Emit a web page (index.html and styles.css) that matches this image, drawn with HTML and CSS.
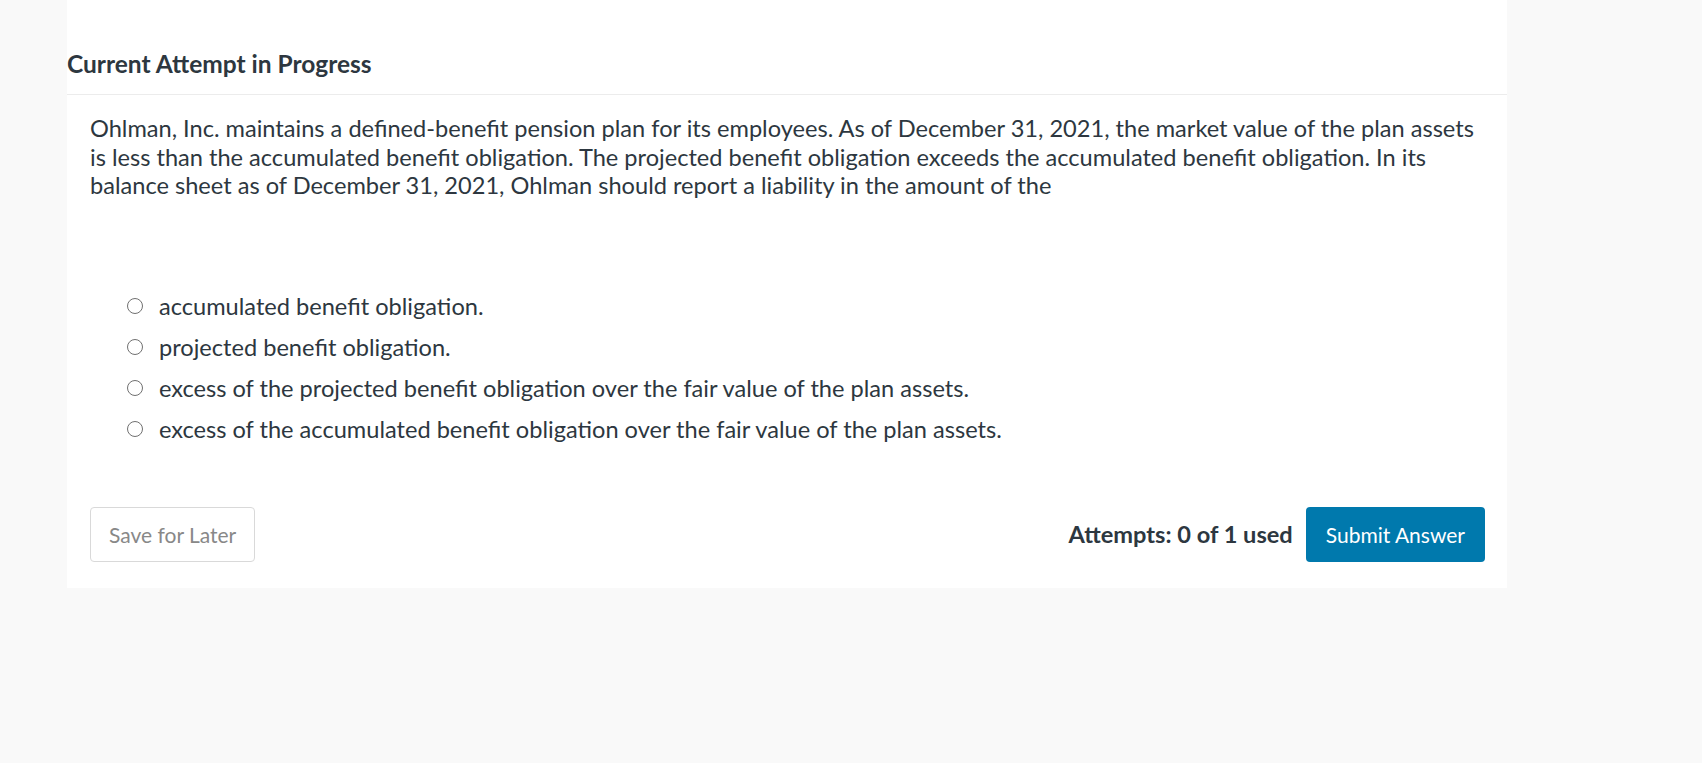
FILE: index.html
```html
<!DOCTYPE html>
<html lang="en">
<head>
    <meta charset="UTF-8">
    <title>Current Attempt in Progress</title>
    <link rel="stylesheet" href="styles.css">
</head>
<body>
<div class="panel">
    <div class="head">
        <h2>Current Attempt in Progress</h2>
    </div>
    <div class="question">
        <p class="stem">Ohlman, Inc. maintains a defined-benefit pension plan for its employees. As of December 31, 2021, the market value of the plan assets is less than the accumulated benefit obligation. The projected benefit obligation exceeds the accumulated benefit obligation. In its balance sheet as of December 31, 2021, Ohlman should report a liability in the amount of the</p>
        <ul class="choices">
            <li><span class="radio"></span>accumulated benefit obligation.</li>
            <li><span class="radio"></span>projected benefit obligation.</li>
            <li><span class="radio"></span>excess of the projected benefit obligation over the fair value of the plan assets.</li>
            <li><span class="radio"></span>excess of the accumulated benefit obligation over the fair value of the plan assets.</li>
        </ul>
        <div class="actions">
            <div class="button save">Save for Later</div>
            <div class="right">
                <span class="attempts">Attempts: 0 of 1 used</span>
                <div class="button submit">Submit Answer</div>
            </div>
        </div>
    </div>
</div>
</body>
</html>
```

FILE: styles.css
```css
html, body, ul, p, h2 {
    margin: 0;
    padding: 0;
}
body {
    background: #f9f9f9;
    font-family: Lato, "Open Sans", sans-serif;
    color: #2d3740;
}
li {
    list-style: none;
}
.panel {
    width: 1440px;
    margin-left: 67px;
    background: #fff;
    padding-bottom: 26px;
}
.head {
    padding-top: 49px;
    padding-bottom: 15px;
    border-bottom: 1px solid #ececec;
}
.head h2 {
    font-size: 24.5px;
    line-height: 30px;
    font-weight: bold;
}
.question {
    padding: 0 22px 0 23px;
}
.stem {
    margin-top: 19px;
    font-size: 23.6px;
    line-height: 28.5px;
}
.choices {
    margin-top: 86px;
    padding-left: 37px;
}
.choices li {
    display: flex;
    align-items: center;
    height: 41px;
    font-size: 23.6px;
}
.radio {
    width: 14px;
    height: 14px;
    border: 1.6px solid #707070;
    border-radius: 50%;
    margin-right: 16px;
    flex-shrink: 0;
}
.actions {
    margin-top: 57px;
    display: flex;
    justify-content: space-between;
    align-items: center;
}
.right {
    display: flex;
    align-items: center;
    gap: 13px;
}
.button {
    height: 55px;
    line-height: 55px;
    box-sizing: border-box;
    border-radius: 4px;
    font-size: 21px;
    padding: 0 18px;
}
.save {
    border: 1px solid #d9d9d9;
    color: #888;
    line-height: 53px;
}
.submit {
    background: #0079ad;
    color: #fff;
    padding: 0 20px;
}
.attempts {
    font-size: 23.6px;
    font-weight: bold;
}
```
